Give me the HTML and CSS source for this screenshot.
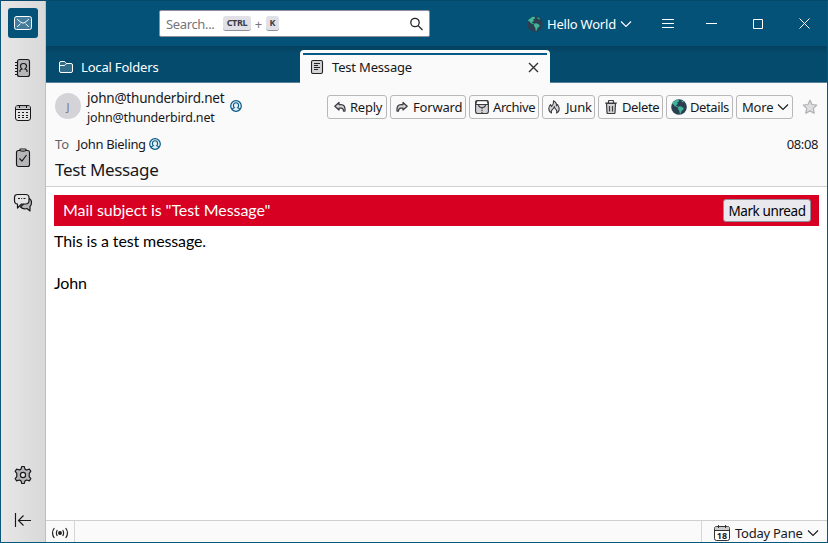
FILE: index.html
```html
<!DOCTYPE html>
<html lang="en">
<head>
<meta charset="utf-8">
<title>Test Message</title>
<link rel="stylesheet" href="styles.css">
</head>
<body>
<svg class="defs" width="0" height="0">
  <symbol id="globe" viewBox="0 0 16 16">
    <circle cx="8" cy="8" r="7.8" fill="#2b3f51"/>
    <path d="M2 3.200 5.500.8 8 1l-.3 1.800-1.500.8.7 1.400-1.700 1.100-.3 1.400-1.600-.7-.8-1.600L.8 5zM10 1.300l2.400.8.4 1.400-1.700-.4zM7.400 7.600l2.100-.4 3.200 1.700-.5 1.800-1.500 1-.9 2.500-1 .8-.5-3.200-1.300-1.700z" fill="#40b59a"/>
    <path d="M4.800 7.300l1.600.3.7 1" fill="none" stroke="#40b59a"/>
  </symbol>
  <symbol id="contact" viewBox="0 0 12 12">
    <circle cx="6" cy="6" r="5.300" fill="#e5f0f6" stroke="#075985" stroke-width="1.200"/>
    <path d="M2.200 9.300c.2-.9.9-1.200 2.200-1.500-.7-.6-1-1.300-1-2.200 0-1.700 1-2.800 2.600-2.800s2.600 1.100 2.600 2.800c0 .9-.3 1.600-1 2.200 1.300.3 2 .6 2.200 1.500" fill="none" stroke="#075985" stroke-width="1.100"/>
  </symbol>
  <symbol id="chevron" viewBox="0 0 12 8"><path d="M1 1.500l5 5 5-5" fill="none" stroke="currentColor" stroke-width="1.100"/></symbol>
</svg>
<div class="window">
  <nav class="rail">
    <div class="space active"><svg width="20" height="16" viewBox="0 0 20 16" fill="none" stroke="#fff" stroke-linecap="round"><rect x="1.500" y="1.500" width="17" height="13" rx="2" fill="#447d9c"/><path d="M4.500 4.500 8 7.400q2 1.400 4 0l3.500-2.900M4.500 11.500l2.800-2.500M15.500 11.500l-2.800-2.500"/></svg></div>
    <div class="space"><svg width="18" height="20" viewBox="0 0 18 20" fill="none" stroke="#18181b" stroke-width="1.150"><rect x="3.500" y="1.500" width="12" height="17" rx="2" fill="#b6b6b8"/><path d="M1 4.500h3M1 7.500h3M1 10.500h3M1 13.500h3M1 16.500h3M6 14v-1.500q0-1 2-1.500-1.500-1-1.500-3 0-2.500 3-2.500t3 2.500q0 2-1.500 3 2 .5 2 1.500V14"/></svg></div>
    <div class="space"><svg width="18" height="18" viewBox="0 0 18 18" fill="none" stroke="#18181b"><rect x="1.500" y="1.500" width="15" height="15" rx="2.500" fill="#e5e5e6"/><path d="M2 4.500V3q0-1 1.500-1h11Q16 2 16 3v1.500z" fill="#b6b6b8" stroke="none"/><path d="M1.500 5.500h15M5.500 1v3M12.500 1v3"/><path d="M4 8.500h10M4 11.500h10M4 13.500h10" stroke-dasharray="2 2"/></svg></div>
    <div class="space"><svg width="16" height="20" viewBox="0 0 16 20" fill="none" stroke="#18181b" stroke-width="1.150"><rect x="1.500" y="2.500" width="13" height="16" rx="2" fill="#b6b6b8"/><path d="M5 2.500v-1q0-.5.5-.5h5q.5 0 .5.500v1q-3 1.200-6 0z" fill="#e5e5e6"/><path d="M4.500 10.500 7 13l4.500-6"/></svg></div>
    <div class="space"><svg width="20" height="20" viewBox="0 0 20 20" fill="none" stroke="#18181b" stroke-width="1.200" stroke-linejoin="round"><path d="M16 5.500q2.500 1 2.500 4 0 2.500-1.500 4v4.500L14 15.500q-4 1-6.500-1.500z" fill="#b6b6b8"/><path d="M4.500 1.500h8q3.500 0 3.500 3v3q0 3.500-3.500 3.500H8.500L4.500 15v-4Q1.500 11 1.500 7.500v-3q0-3 3-3z" fill="#e5e5e6"/><path d="M5 5.500h2M8.200 5.500h1M10.500 5.500h2"/></svg></div>
    <div class="space settings"><svg width="20" height="20" viewBox="0 0 20 20" fill="#b6b6b8" stroke="#18181b" stroke-width="1.200" stroke-linejoin="round"><path d="M8.800 1.500h2.400l.8 2.600q.8.400 1.500.9l3-.8 1.300 2.200-1.600 2v3.200l1.600 2-1.300 2.200-3-.8q-.7.500-1.500.9l-.8 2.600H8.800L8 15.900q-.8-.4-1.500-.9l-3 .8-1.300-2.200 1.600-2V8.400l-1.600-2 1.300-2.200 3 .8Q7.200 4.500 8 4.100z"/><circle cx="10" cy="10" r="2.600" fill="#e5e5e6"/></svg></div>
    <div class="space"><svg width="18" height="16" viewBox="0 0 18 16" fill="none" stroke="#18181b" stroke-width="1.150"><path d="M1.500 1v14M17 8.500H4.500M9.500 3.500l-5 5 5 5"/></svg></div>
  </nav>
  <div class="main">
    <header class="titlebar">
      <div class="search"><span class="ph">Search...</span><kbd class="ctrl">CTRL</kbd><span class="plus">+</span><kbd>K</kbd><svg class="lens" width="14" height="14" viewBox="0 0 14 14" fill="none" stroke="#222" stroke-width="1.300"><circle cx="6" cy="5.500" r="4.200"/><path d="M9.100 8.600 13.500 13"/></svg></div>
      <div class="hello"><svg width="16" height="16"><use href="#globe"/></svg><span>Hello World</span><svg class="chev" width="12" height="8"><use href="#chevron"/></svg></div>
      <svg class="burger" width="12" height="11" viewBox="0 0 12 11" stroke="#fff"><path d="M0 1.500h12M0 5.500h12M0 9.500h12"/></svg>
      <div class="controls"><svg width="11" height="11" viewBox="0 0 11 11" stroke="#fff"><path d="M0 5.500h11"/></svg><svg width="10" height="10" viewBox="0 0 10 10" stroke="#fff" fill="none"><path d="M.5.500h9v9h-9z"/></svg><svg width="11" height="11" viewBox="0 0 11 11" stroke="#fff"><path d="m.5.500 10 10M10.500.500l-10 10"/></svg></div>
    </header>
    <div class="tabs">
      <div class="tab folders"><svg width="16" height="14" viewBox="0 0 16 14" fill="none" stroke="#fff"><path d="M1.500 3q0-1.500 1.500-1.500h3q1 0 1.500 1T9 3.500h4q1.500 0 1.500 1.500v6q0 1.500-1.500 1.500H3q-1.500 0-1.500-1.500z" fill="#316c89"/><path d="M1.500 5.500H6q1 0 1.500-1t2-1"/></svg><span>Local Folders</span></div>
      <div class="tab selected"><svg width="14" height="16" viewBox="0 0 14 16" fill="none" stroke="#222" stroke-width="1.100"><rect x="1.500" y="1.500" width="11" height="13" rx="1.500" fill="#d3d3d6"/><path d="M4 4.500h6M4 6.500h4M4 8.500h6M4 10.500h4"/></svg><span>Test Message</span><svg class="close" width="11" height="11" viewBox="0 0 11 11" stroke="#333" stroke-width="1.400"><path d="m1 1 9 9M10 1l-9 9"/></svg></div>
    </div>
    <section class="msghead">
      <div class="toprow">
        <div class="avatar">J</div>
        <div class="sender"><div class="name">john@thunderbird.net</div><div class="address">john@thunderbird.net</div></div>
        <svg class="person" width="12" height="12"><use href="#contact"/></svg>
        <div class="actions">
          <div class="btn reply"><svg width="12" height="12" viewBox="0 0 12 12" fill="#d3d3d6" stroke="#3b3b40" stroke-width="1.250" stroke-linejoin="round"><path d="M5 1.500v2h2q4.500 0 4 6.500H9.500Q9.500 7 7 7H5v2L.8 5.300z"/></svg><span>Reply</span></div>
          <div class="btn forward"><svg width="12" height="12" viewBox="0 0 12 12" fill="#d3d3d6" stroke="#3b3b40" stroke-width="1.250" stroke-linejoin="round"><path d="M7 1.500v2H5q-4.500 0-4 6.500h1.500Q2.500 7 5 7h2v2l4.200-3.700z"/></svg><span>Forward</span></div>
          <div class="btn archive"><svg width="14" height="14" viewBox="0 0 14 14" fill="none" stroke="#3b3b40" stroke-width="1.150"><path d="M.6 4.500V2.500q0-2 2-2h8.800q2 0 2 2v9q0 2-2 2H2.600q-2 0-2-2z" fill="#d3d3d6"/><path d="M.6 4.500 2 .6h10l1.400 3.900z" fill="#fff"/><path d="M3.500 4.500q0 3 3.500 3t3.500-3"/><path d="M7 7.500V14" stroke-dasharray="1.500 .7"/></svg><span>Archive</span></div>
          <div class="btn junk"><svg width="12" height="14" viewBox="0 0 12 14" fill="#d3d3d6" stroke="#3b3b40" stroke-width="1.100" stroke-linejoin="round"><path d="M3.500 13Q.8 11.500.8 8.500q0-2 1.700-4l1 2Q6 4 5.500.800q3.500 2 3 5l1-1.300q1.700 2.500 1.700 4.500 0 3-2.700 4 1-2-.5-3.500L6.800 8 6.300 6.500Q6 8.500 4.300 9.500 2.700 11 3.500 13z"/></svg><span>Junk</span></div>
          <div class="btn delete"><svg width="12" height="14" viewBox="0 0 12 14" fill="none" stroke="#3b3b40" stroke-width="1.200"><path d="M1.500 3.500h9l-.5 9q0 1-1 1H3q-1 0-1-1z" fill="#d3d3d6"/><path d="M0 3h12M3.500 3V1.500q0-1 1-1h3q1 0 1 1V3M4.500 6v5.500M7.500 6v5.500"/></svg><span>Delete</span></div>
          <div class="btn details"><svg width="16" height="16"><use href="#globe"/></svg><span>Details</span></div>
          <div class="btn more"><span>More</span><svg width="12" height="8"><use href="#chevron"/></svg></div>
        </div>
        <svg class="star" width="16" height="16" viewBox="0 0 16 16" fill="#dedee0" stroke="#b0b0b3" stroke-width="1.200" stroke-linejoin="round"><path d="m8 1.200 2 4.300 4.800.6-3.500 3.300.9 4.800L8 11.900l-4.200 2.300.9-4.800L1.200 6.100 6 5.500z"/></svg>
      </div>
      <div class="torow"><span class="to">To</span><span class="rcpt">John Bieling</span><svg width="12" height="12"><use href="#contact"/></svg><time>08:08</time></div>
      <h1><span>Test Message</span></h1>
    </section>
    <article>
      <div class="notice"><span>Mail subject is "Test Message"</span><button>Mark unread</button></div>
      <p class="line1"><span>This is a test message.</span></p>
      <p class="line2"><span>John</span></p>
    </article>
    <footer>
      <div class="online"><svg width="18" height="12" viewBox="0 0 18 12" fill="none" stroke="#222" stroke-width="1.200"><circle cx="9" cy="6" r="1.300" fill="#222"/><path d="M6.300 3Q4.500 6 6.300 9M11.700 3q1.800 3 0 6M3.300 1Q-.3 6 3.300 11M14.700 1q3.600 5 0 10"/></svg></div>
      <div class="today"><div class="cal"><svg width="16" height="16" viewBox="0 0 16 16" fill="#fff" stroke="#333"><rect x=".5" y="1.500" width="15" height="14" rx="2"/><path d="M1 5V3q0-1 1-1h12q1 0 1 1v2z" fill="#ccc" stroke="none"/><path d="M.5 5.500h15M4.500 0v3M11.500 0v3"/></svg><b>18</b></div><span>Today Pane</span><svg class="chev" width="12" height="8"><use href="#chevron"/></svg></div>
    </footer>
  </div>
</div>
</body>
</html>
```
FILE: styles.css
```css
* { box-sizing: border-box; }
body { margin: 0; font: 13px/18px "Noto Sans", sans-serif; color: #18181b; }
svg { display: block; flex: none; }
.defs { display: none; }
.window { width: 828px; height: 543px; display: flex; border: 1px solid #0b577c; border-top-color: #06486a; overflow: hidden; white-space: nowrap; }
.rail { width: 45px; border-right: 1px solid #bfbfc2; background: linear-gradient(90deg, #e8e6e6, #d9d9da); display: flex; flex-direction: column; align-items: center; padding: 7px 0; gap: 15px; }
.space { width: 30px; height: 30px; display: flex; align-items: center; justify-content: center; flex: none; }
.space.active { background: #055278; border-radius: 3px; }
.settings { margin-top: auto; }
.main { flex: 1; min-width: 0; display: flex; flex-direction: column; background: #fff; }
.titlebar { height: 45px; background: #055278; display: flex; align-items: center; padding: 0 17px 0 113px; color: #fff; flex: none; }
.search { width: 271px; height: 27px; background: #fff; border: 1px solid #8f8f9d; border-radius: 2px; display: flex; align-items: center; padding: 0 6px; color: #75757b; }
.ph { width: 57px; letter-spacing: -.35px; }
kbd { height: 15px; border-radius: 3px; background: #e0e0e6; border-bottom: 1px solid #8f8f9d; color: #3b3b45; font: bold 9px/14px "Noto Sans", sans-serif; text-align: center; width: 13px; }
kbd.ctrl { width: 28px; letter-spacing: -.3px; }
.plus { width: 15px; text-align: center; }
.lens { margin-left: auto; }
.hello { display: flex; align-items: center; margin-left: 97px; width: 104px; }
.hello span { margin-left: 4px; width: 69px; letter-spacing: -.22px; }
.chev { margin-left: 4px; }
.burger { margin-left: 31px; }
.controls { margin-left: auto; display: flex; align-items: center; gap: 36px; }
.tabs { height: 37px; background: linear-gradient(#04415f, #054b6d 8px); border-bottom: 1px solid #5b8199; display: flex; flex: none; }
.tab { display: flex; align-items: center; letter-spacing: -.18px; }
.folders { width: 254px; padding: 6px 0 0 12px; color: #fff; gap: 7px; }
.selected { width: 250px; height: 33px; margin-top: 4px; background: linear-gradient(#075985, #075985) 3px 3px / 244px 2px no-repeat #fafafa; border-radius: 4px 4px 0 0; padding: 1px 11px 0 10px; gap: 8px; }
.close { margin-left: auto; }
.msghead { height: 104px; background: #fafafa; border-bottom: 1px solid #cfcfcf; flex: none; }
.toprow { display: flex; height: 48px; padding-left: 9px; }
.avatar { width: 26px; height: 26px; margin-top: 10px; border-radius: 50%; background: #d4d4d8; color: #77777b; font-size: 11px; line-height: 28px; text-align: center; }
.sender { margin: 6px 0 0 6px; width: 137px; }
.name { font-size: 13.5px; line-height: 19px; letter-spacing: -.22px; }
.address { font-size: 12.5px; line-height: 19px; letter-spacing: -.18px; }
.person { margin: 17px 0 0 6px; }
.actions { display: flex; gap: 3px; margin: 12px 0 0 85px; }
.btn { height: 24px; border: 1px solid #b8b8bb; border-radius: 3px; display: flex; align-items: center; gap: 4px; padding-left: 6px; letter-spacing: -.4px; }
.reply { width: 60px; letter-spacing: -.25px; }
.forward { width: 76px; padding-left: 5px; gap: 5px; letter-spacing: -.2px; }
.archive { width: 70px; padding-left: 5px; }
.junk { width: 53px; padding-left: 5px; letter-spacing: -.2px; gap: 6px; }
.delete { width: 65px; padding-left: 6px; gap: 5px; }
.details { width: 67px; padding-left: 4px; gap: 3px; }
.more { width: 57px; padding-left: 5px; gap: 4px; letter-spacing: -.2px; }
.star { margin: 16px 0 0 9px; }
.torow { display: flex; align-items: center; height: 26px; padding: 0 9px; }
.to { width: 22px; color: #62626a; }
.rcpt { width: 72px; letter-spacing: -.33px; }
time { margin-left: auto; letter-spacing: -.4px; }
h1 { margin: 0; padding-left: 9px; font-size: 17px; font-weight: 400; line-height: 26px; letter-spacing: -.33px; }
article { flex: 1; padding: 8px; font: 16px/21px Lato, sans-serif; color: #000; letter-spacing: -.12px; }
.notice { height: 31px; background: #d70022; color: #fff; display: flex; align-items: center; justify-content: space-between; padding: 0 8px 0 9px; letter-spacing: -.07px; }
.notice span { padding-bottom: 2px; }
button { width: 88px; height: 23px; padding: 0; border: 1px solid #8f8f9d; border-radius: 3px; background: #e9e9ed; color: #000; font: 13.5px/18px "Noto Sans", sans-serif; letter-spacing: -.4px; }
p { margin: 0; }
.line1 { padding-top: 4px; }
.line2 { padding-top: 21px; }
footer { height: 22px; background: #fafafa; border-top: 1px solid #cfcfcf; display: flex; justify-content: space-between; flex: none; }
.online { width: 29px; border-right: 1px solid #d5d5d5; padding: 6px 0 0 5px; }
.today { width: 126px; border-left: 1px solid #d5d5d5; display: flex; align-items: center; padding: 3px 0 0 12px; letter-spacing: -.25px; }
.cal { display: grid; margin-right: 5px; }
.cal svg, .cal b { grid-area: 1 / 1; }
.cal b { font: bold 9px/10px "Noto Sans", sans-serif; text-align: center; padding-top: 6px; letter-spacing: 0; }
```
